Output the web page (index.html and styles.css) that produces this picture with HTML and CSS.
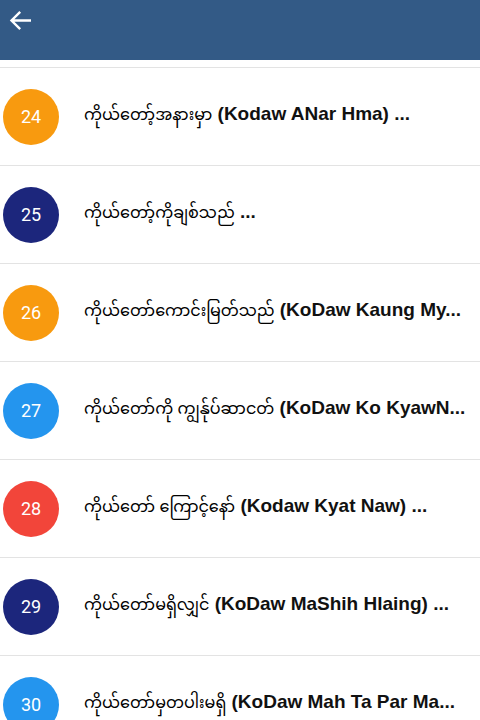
FILE: index.html
```html
<html>
<head>
<meta name="viewport" content="width=device-width, initial-scale=1">
<title>ကိုယ်တော်</title>
<link rel="stylesheet" href="styles.css">
</head>
<body>
    <div class="toolbar">
        <svg class="back" width="24" height="24" viewBox="0 0 24 24">
            <path d="M22 11.5H2.6M11.2 2.8L2.5 11.5l8.7 8.7" fill="none" stroke="#fff" stroke-width="2.4"/>
        </svg>
    </div>
    <div class="list">
        <div class="item">
            <div class="num orange">24</div>
            <div class="title"><span class="mm">ကိုယ်တော့်အနားမှာ</span> (Kodaw ANar Hma) ...</div>
        </div>
        <div class="item">
            <div class="num navy">25</div>
            <div class="title"><span class="mm">ကိုယ်တော့်ကိုချစ်သည်</span> ...</div>
        </div>
        <div class="item">
            <div class="num orange">26</div>
            <div class="title"><span class="mm">ကိုယ်တော်ကောင်းမြတ်သည်</span> (KoDaw Kaung My...</div>
        </div>
        <div class="item">
            <div class="num blue">27</div>
            <div class="title"><span class="mm">ကိုယ်တော်ကို ကျွန်ုပ်ဆာငတ်</span> (KoDaw Ko KyawN...</div>
        </div>
        <div class="item">
            <div class="num red">28</div>
            <div class="title"><span class="mm">ကိုယ်တော် ကြောင့်နော်</span> (Kodaw Kyat Naw) ...</div>
        </div>
        <div class="item">
            <div class="num navy">29</div>
            <div class="title"><span class="mm">ကိုယ်တော်မရှိလျှင်</span> (KoDaw MaShih Hlaing) ...</div>
        </div>
        <div class="item">
            <div class="num blue">30</div>
            <div class="title"><span class="mm">ကိုယ်တော်မှတပါးမရှိ</span> (KoDaw Mah Ta Par Ma...</div>
        </div>
    </div>
</body>
</html>
```

FILE: styles.css
```css
body {
    margin: 0;
    padding: 0;
    background: white;
    font-family: "Liberation Sans", "Noto Sans Myanmar", "Padauk", "Myanmar Text", sans-serif;
    overflow: hidden;
}
.toolbar {
    height: 60px;
    background: #335a86;
    display: flex;
    align-items: flex-start;
    padding: 9px 0 0 9px;
    box-sizing: border-box;
}
.toolbar .back {
    width: 24px;
    height: 24px;
}
.list {
    padding-top: 7px;
}
.item {
    display: flex;
    align-items: center;
    height: 97px;
    border-top: 1px solid #e3e3e3;
    padding-left: 3px;
}
.num {
    flex: none;
    width: 56px;
    height: 56px;
    border-radius: 50%;
    color: white;
    font-family: Roboto, "Liberation Sans", sans-serif;
    font-size: 18px;
    display: flex;
    align-items: center;
    justify-content: center;
}
.orange { background: #f89a0f; }
.navy { background: #1c267c; }
.blue { background: #2495ee; }
.red { background: #f2453a; }
.title {
    margin-left: 25px;
    font-size: 19px;
    font-weight: bold;
    color: #111;
    white-space: nowrap;
    overflow: hidden;
}
.title .mm {
    font-size: 16px;
    font-weight: normal;
    color: #000;
}
```
